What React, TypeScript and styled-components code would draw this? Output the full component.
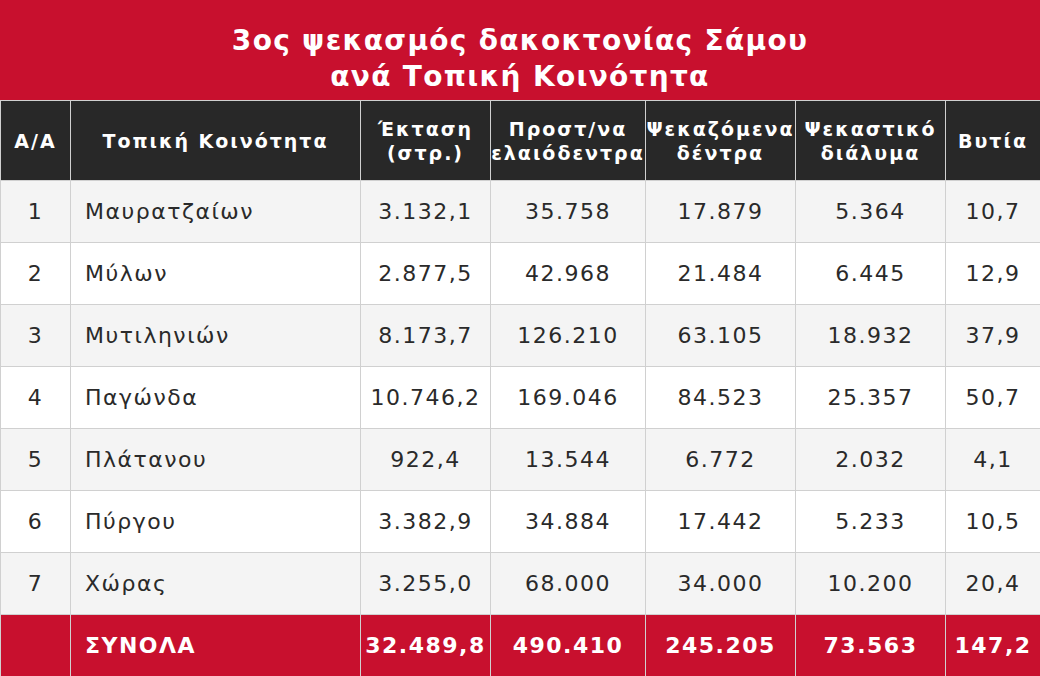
import React from "react";
import styled, { createGlobalStyle } from "styled-components";

const Global = createGlobalStyle`
  html, body { margin: 0; padding: 0; background: #ffffff; }
  body { font-family: "DejaVu Sans", "Noto Sans", sans-serif; }
`;

const Page = styled.div`
  width: 1040px;
  display: flex;
  flex-direction: column;
`;

const TitleBar = styled.div`
  height: 100px;
  background: #c8102e;
  color: #ffffff;
  display: flex;
  align-items: center;
  justify-content: center;
  text-align: center;
  font-weight: 700;
  font-size: 28px;
  line-height: 36px;
  letter-spacing: 1.3px;
  box-sizing: border-box;
  padding-top: 18px;
`;

const Table = styled.table`
  width: 1040px;
  border-collapse: collapse;
  table-layout: fixed;
`;

const HeadCell = styled.th`
  background: #282828;
  color: #ffffff;
  height: 80px;
  padding: 0;
  font-size: 19px;
  font-weight: 700;
  letter-spacing: 2px;
  line-height: 24px;
  text-align: center;
  border: 1px solid #d0d0d0;
  box-sizing: border-box;
  white-space: nowrap;
`;

const Row = styled.tr<{ $alt: boolean; $total?: boolean }>`
  background: ${(p) => (p.$total ? "#c8102e" : p.$alt ? "#f4f4f4" : "#ffffff")};
  color: ${(p) => (p.$total ? "#ffffff" : "#2a2a2a")};
  font-weight: ${(p) => (p.$total ? 700 : 400)};
`;

const Cell = styled.td<{ $left?: boolean }>`
  height: 62px;
  padding: ${(p) => (p.$left ? "0 0 0 14px" : "0")};
  font-size: 22px;
  letter-spacing: 1.5px;
  text-align: ${(p) => (p.$left ? "left" : "center")};
  border: 1px solid #d0d0d0;
  box-sizing: border-box;
  white-space: nowrap;
`;

const widths = [70, 290, 130, 155, 150, 150, 95];

const rows = [
  ["1", "Μαυρατζαίων", "3.132,1", "35.758", "17.879", "5.364", "10,7"],
  ["2", "Μύλων", "2.877,5", "42.968", "21.484", "6.445", "12,9"],
  ["3", "Μυτιληνιών", "8.173,7", "126.210", "63.105", "18.932", "37,9"],
  ["4", "Παγώνδα", "10.746,2", "169.046", "84.523", "25.357", "50,7"],
  ["5", "Πλάτανου", "922,4", "13.544", "6.772", "2.032", "4,1"],
  ["6", "Πύργου", "3.382,9", "34.884", "17.442", "5.233", "10,5"],
  ["7", "Χώρας", "3.255,0", "68.000", "34.000", "10.200", "20,4"],
];

const totals = ["", "ΣΥΝΟΛΑ", "32.489,8", "490.410", "245.205", "73.563", "147,2"];

const headers: React.ReactNode[] = [
  "Α/Α",
  "Τοπική Κοινότητα",
  <>Έκταση<br />(στρ.)</>,
  <>Προστ/να<br />ελαιόδεντρα</>,
  <>Ψεκαζόμενα<br />δέντρα</>,
  <>Ψεκαστικό<br />διάλυμα</>,
  "Βυτία",
];

export default function App() {
  return (
    <Page>
      <Global />
      <TitleBar>
        3ος ψεκασμός δακοκτονίας Σάμου
        <br />
        ανά Τοπική Κοινότητα
      </TitleBar>
      <Table>
        <colgroup>
          {widths.map((w, i) => (
            <col key={i} style={{ width: w }} />
          ))}
        </colgroup>
        <thead>
          <tr>
            {headers.map((h, i) => (
              <HeadCell key={i}>{h}</HeadCell>
            ))}
          </tr>
        </thead>
        <tbody>
          {rows.map((r, ri) => (
            <Row key={ri} $alt={ri % 2 === 0}>
              {r.map((c, ci) => (
                <Cell key={ci} $left={ci === 1}>
                  {c}
                </Cell>
              ))}
            </Row>
          ))}
          <Row $alt={false} $total>
            {totals.map((c, ci) => (
              <Cell key={ci} $left={ci === 1}>
                {c}
              </Cell>
            ))}
          </Row>
        </tbody>
      </Table>
    </Page>
  );
}
